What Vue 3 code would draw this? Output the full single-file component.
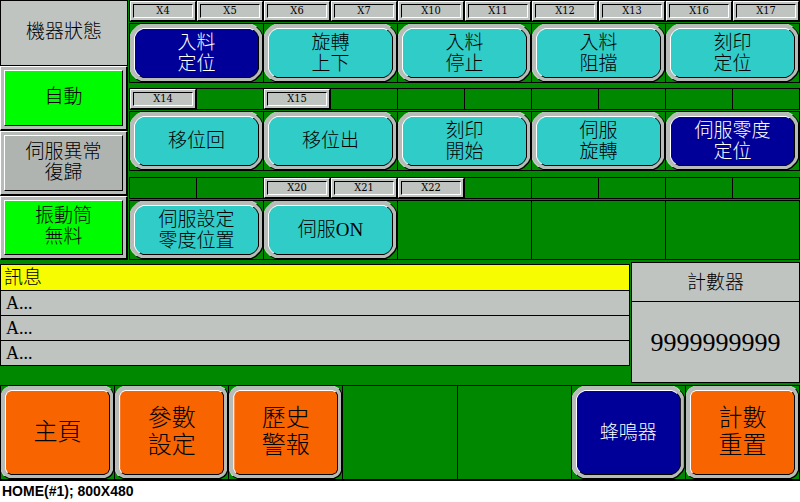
<script setup>
const statusButtons = [
  { lines: ['自動'], tone: 'lime' },
  { lines: ['伺服異常', '復歸'], tone: 'grey' },
  { lines: ['振動筒', '無料'], tone: 'lime' },
]

const rows = [
  {
    tags: ['X4', 'X5', 'X6', 'X7', 'X10', 'X11', 'X12', 'X13', 'X16', 'X17'],
    actions: [
      { lines: ['入料', '定位'], tone: 'navy' },
      { lines: ['旋轉', '上下'], tone: 'teal' },
      { lines: ['入料', '停止'], tone: 'teal' },
      { lines: ['入料', '阻擋'], tone: 'teal' },
      { lines: ['刻印', '定位'], tone: 'teal' },
    ],
  },
  {
    tags: ['X14', '', 'X15', '', '', '', '', '', '', ''],
    actions: [
      { lines: ['移位回'], tone: 'teal' },
      { lines: ['移位出'], tone: 'teal' },
      { lines: ['刻印', '開始'], tone: 'teal' },
      { lines: ['伺服', '旋轉'], tone: 'teal' },
      { lines: ['伺服零度', '定位'], tone: 'navy' },
    ],
  },
  {
    tags: ['', '', 'X20', 'X21', 'X22', '', '', '', '', ''],
    actions: [
      { lines: ['伺服設定', '零度位置'], tone: 'teal' },
      { lines: ['伺服ON'], tone: 'teal' },
      null,
      null,
      null,
    ],
  },
]

const messages = ['A...', 'A...', 'A...']

const navigation = [
  { lines: ['主頁'], tone: 'orange' },
  { lines: ['參數', '設定'], tone: 'orange' },
  { lines: ['歷史', '警報'], tone: 'orange' },
  null,
  null,
  { lines: ['蜂鳴器'], tone: 'navy' },
  { lines: ['計數', '重置'], tone: 'orange' },
]
</script>

<template>
  <div class="page">
    <main class="panel">
      <div class="upper">
        <section class="status">
          <h1 class="status-title">機器狀態</h1>
          <button
            v-for="(item, i) in statusButtons"
            :key="i"
            type="button"
            class="square-button"
            :class="item.tone"
          >
            <span class="square-face">
              <span v-for="line in item.lines" :key="line" class="line">{{ line }}</span>
            </span>
          </button>
        </section>

        <section class="controls">
          <div v-for="(row, r) in rows" :key="r" class="control-row">
            <div class="tags">
              <div v-for="(tag, i) in row.tags" :key="i" class="cell">
                <span v-if="tag" class="tag"><span class="tag-face">{{ tag }}</span></span>
              </div>
            </div>
            <div class="actions">
              <div v-for="(item, i) in row.actions" :key="i" class="cell">
                <button v-if="item" type="button" class="key cut" :class="item.tone">
                  <span class="rim cut">
                    <span class="bevel cut">
                      <span class="face cut">
                        <span v-for="line in item.lines" :key="line" class="line">{{ line }}</span>
                      </span>
                    </span>
                  </span>
                </button>
              </div>
            </div>
          </div>
        </section>
      </div>

      <div class="middle">
        <table class="messages">
          <thead>
            <tr><th scope="col">訊息</th></tr>
          </thead>
          <tbody>
            <tr v-for="(message, i) in messages" :key="i"><td>{{ message }}</td></tr>
          </tbody>
        </table>
        <section class="counter">
          <h2 class="counter-title">計數器</h2>
          <output class="counter-value">9999999999</output>
        </section>
      </div>

      <nav class="navigation">
        <div v-for="(item, i) in navigation" :key="i" class="cell">
          <button v-if="item" type="button" class="key cut" :class="item.tone">
            <span class="rim cut">
              <span class="bevel cut">
                <span class="face cut">
                  <span v-for="line in item.lines" :key="line" class="line">{{ line }}</span>
                </span>
              </span>
            </span>
          </button>
        </div>
      </nav>
    </main>
    <footer class="caption">HOME(#1); 800X480</footer>
  </div>
</template>

<style>
body {
  margin: 0;
  background: #fff;
}
</style>

<style scoped>
.page {
  --green: #008800;
  --silver: #c0c4c0;
  --rim: #b8bcb8;
  font-family: "Liberation Serif", "Noto Sans CJK TC", serif;
  font-size: 19px;
  line-height: 21px;
  font-weight: 300;
  color: #000;
}

.page * {
  box-sizing: border-box;
}

.panel {
  background: var(--green);
}

.upper {
  display: grid;
  grid-template-columns: 128px 1fr;
  column-gap: 1px;
}

.status {
  display: grid;
  grid-template-rows: 66px 65px 65px 64px;
}

.status-title,
.counter-title {
  display: flex;
  align-items: center;
  justify-content: center;
  margin: 0;
  font-size: 19px;
  font-weight: 300;
  background: var(--silver);
}

.status-title {
  border: 1px solid #000;
  padding-bottom: 4px;
}

button {
  margin: 0;
  font: inherit;
  color: inherit;
  cursor: pointer;
}

.square-button {
  display: flex;
  padding: 3px;
  background: var(--rim);
  border: solid;
  border-width: 1px 2px 2px 1px;
  border-color: #fff #000 #000 #fff;
}

.square-face {
  flex: 1;
  display: flex;
  flex-direction: column;
  align-items: center;
  justify-content: center;
  align-self: stretch;
  padding-bottom: 3px;
  border: 1px solid;
  border-color: #fff #000 #000 #fff;
}

.lime .square-face {
  background: #00fc00;
}

.grey .square-face {
  background: #b0b4b0;
}

.controls {
  display: grid;
  grid-template-rows: 88px 89px 83px;
}

.control-row {
  display: grid;
  grid-template-rows: 22px 60px;
  row-gap: 1px;
  align-content: start;
}

.tags,
.actions,
.navigation {
  display: grid;
  gap: 1px;
  padding: 1px;
  background: #000;
}

.tags {
  grid-template-columns: repeat(10, 1fr);
}

.actions {
  grid-template-columns: repeat(5, 1fr);
}

.cell {
  display: grid;
  min-width: 0;
  background: var(--green);
}

.tag {
  display: grid;
  padding: 2px;
  background: var(--silver);
  border: 1px solid;
  border-color: #fff #000 #000 #fff;
}

.tag-face {
  display: flex;
  align-items: center;
  justify-content: center;
  font-family: "DejaVu Serif Condensed", "DejaVu Serif", serif;
  font-size: 11px;
  font-weight: 400;
  line-height: 12px;
  border: 1px solid;
  border-color: #000 #fff #fff #000;
}

.cut {
  clip-path: polygon(
    0 var(--cut),
    2px calc(var(--cut) - 4px),
    calc(var(--cut) - 4px) 2px,
    var(--cut) 0,
    calc(100% - var(--cut)) 0,
    calc(100% - var(--cut) + 4px) 2px,
    calc(100% - 2px) calc(var(--cut) - 4px),
    100% var(--cut),
    100% calc(100% - var(--cut)),
    calc(100% - 2px) calc(100% - var(--cut) + 4px),
    calc(100% - var(--cut) + 4px) calc(100% - 2px),
    calc(100% - var(--cut)) 100%,
    var(--cut) 100%,
    calc(var(--cut) - 4px) calc(100% - 2px),
    2px calc(100% - var(--cut) + 4px),
    0 calc(100% - var(--cut))
  );
}

.key {
  --cut: 11px;
  display: grid;
  padding: 0 1px 1px 0;
  border: 0;
  background: linear-gradient(to bottom right, #e0e4e0 50%, #000 50%);
}

.rim {
  --cut: 11px;
  display: grid;
  padding: 4px 3px 3px 4px;
  background: var(--rim);
}

.bevel {
  --cut: 9px;
  display: grid;
  padding: 1px;
  background: linear-gradient(to bottom right, #fff 50%, #000 50%);
}

.face {
  --cut: 8px;
  display: flex;
  flex-direction: column;
  align-items: center;
  justify-content: center;
  padding-bottom: 1px;
}

.teal .face {
  background: #30ccc8;
}

.navy {
  color: #fff;
}

.navy .face {
  background: #000098;
}

.orange .face {
  background: #f86400;
}

.line {
  display: block;
  white-space: nowrap;
}

.middle {
  display: grid;
  grid-template-columns: 630fr 169fr;
  column-gap: 1px;
  align-items: start;
  padding: 2px 0;
}

.messages {
  width: 100%;
  margin-top: 2px;
  border-collapse: collapse;
  background: var(--silver);
}

.messages th,
.messages td {
  height: 25px;
  padding: 0 5px;
  text-align: left;
  font-size: 18px;
  font-weight: 400;
  border: 1px solid #000;
}

.messages th {
  height: 26px;
  padding: 0 3px;
  font-size: 19px;
  font-weight: 300;
  background: #f8fc00;
}

.counter {
  display: grid;
  grid-template-rows: 38px 80px;
  row-gap: 1px;
  padding: 1px;
  background: #000;
}

.counter-value {
  display: flex;
  align-items: center;
  justify-content: center;
  font-size: 26px;
  background: var(--silver);
}

.navigation {
  grid-template-columns: repeat(7, 1fr);
  grid-template-rows: 93px;
  padding-bottom: 2px;
  font-size: 24px;
  line-height: 27px;
}

.navigation .navy {
  font-size: 19px;
}

.navigation .orange,
.navigation .orange .rim {
  --cut: 8px;
}

.navigation .orange .bevel {
  --cut: 6px;
}

.navigation .orange .face {
  --cut: 5px;
}

.caption {
  padding: 1px 2px;
  font-family: "Liberation Sans", sans-serif;
  font-size: 14px;
  font-weight: 700;
  line-height: 18px;
}
</style>
